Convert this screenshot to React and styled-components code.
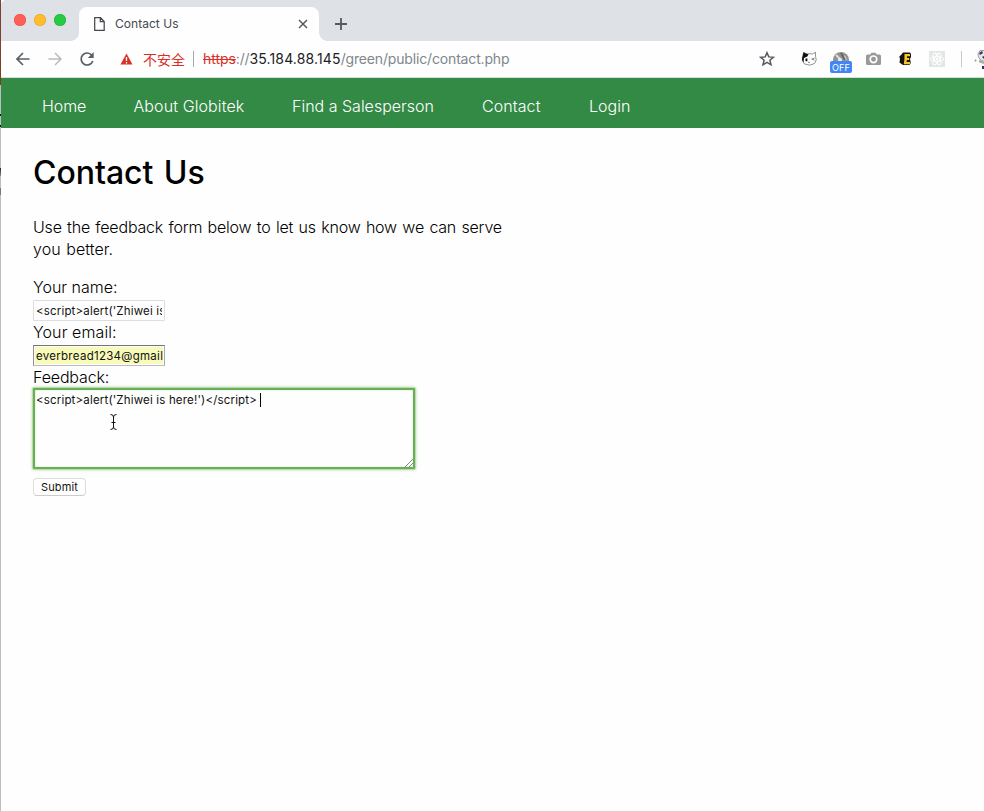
import React from 'react';
import styled, { createGlobalStyle } from 'styled-components';

const GlobalStyle = createGlobalStyle`
  *, *::before, *::after { box-sizing: border-box; }
  body { margin: 0; background: #fefefe; color: #000; overflow: hidden;
    font-family: Inter, "Liberation Sans", "Noto Sans CJK SC", sans-serif; }
`;
const Screen = styled.div`
  display: grid; grid-template-columns: 1px 983px; width: 984px; height: 811px; overflow: hidden;
`;
const DesktopEdge = styled.div`
  background:
    linear-gradient(#111, #111) 0 114px / 1px 2px no-repeat,
    linear-gradient(#111, #111) 0 125px / 1px 2px no-repeat,
    linear-gradient(#222, #888) 0 168px / 1px 8px no-repeat,
    linear-gradient(#777, #777) 0 188px / 1px 7px no-repeat,
    linear-gradient(#7a4335 0 60px, #803b17 60px 85px, #bebebe 85px);
`;
const Window = styled.div`min-width: 0;`;
const TabStrip = styled.div`
  display: flex; align-items: flex-end; height: 41px; padding-left: 12px;
  background: #dee1e6; border-top-left-radius: 5px;
`;
const Lights = styled.div`display: flex; gap: 8px; width: 66px; height: 26px;`;
const Light = styled.i`
  width: 12px; height: 12px; border-radius: 50%; background: ${p => p.$color};
  box-shadow: inset 0 0 0 .5px ${p => p.$rim};
`;
const LightsPad = styled.div`align-self: flex-start; padding: 14.4px 0 0 1px;`;
const Tab = styled.div`
  position: relative; display: flex; align-items: center; width: 240px; height: 34px;
  margin-left: -1px; padding: 0 11px 0 15px; background: #fefefe; border-radius: 8px 8px 0 0;
  &::before, &::after { content: ''; position: absolute; bottom: 0; width: 8px; height: 8px; }
  &::before { left: -8px; background: radial-gradient(circle at 0 0, transparent 7.5px, #fefefe 8px); }
  &::after { right: -8px; background: radial-gradient(circle at 100% 0, transparent 7.5px, #fefefe 8px); }
`;
const TabTitle = styled.span`
  margin-left: 10px; flex: 1; font-size: 12px; line-height: 16px; letter-spacing: .03px; color: #45494d;
`;
const NewTab = styled.div`height: 34px; display: flex; align-items: center; margin-left: 15px;`;
const Toolbar = styled.div`
  display: flex; align-items: center; height: 37px; background: #fefefe; border-bottom: 1px solid #dadcdc;
`;
const NavIcons = styled.div`display: flex; gap: 16px; margin-left: 14px;`;
const Address = styled.div`display: flex; align-items: center; margin-left: 25px; width: 639px; height: 36px;`;
const Insecure = styled.span`
  margin-left: 10px; width: 50px; white-space: nowrap; color: #d93025;
  font: 14px/20px "Noto Sans CJK SC", sans-serif;
`;
const Divider = styled.i`width: 1px; height: 16px; background: ${p => p.$color};`;
const Url = styled.span`
  margin-left: 9px; font-size: 14px; line-height: 20px; letter-spacing: -.16px; color: #80868b; white-space: nowrap;
`;
const Scheme = styled.span`color: #d93025; text-decoration: line-through; letter-spacing: -.05px;`;
const Host = styled.span`color: #202124; letter-spacing: 0.14px;`;
const Extensions = styled.div`display: flex; align-items: center; height: 36px; margin-left: 18px;`;
const ExtensionSlot = styled.div`
  position: relative; width: ${p => p.$width || 32}px; height: 24px; display: flex; align-items: center; justify-content: center; flex: none;
`;
const Badge = styled.b`
  position: absolute; left: 5px; top: 14px; width: 22px; height: 12px; border-radius: 2px;
  background: #4285f4; color: #fff; font-size: 9px; line-height: 13px; font-weight: 400; text-align: center; letter-spacing: .1px;
`;
const SiteNav = styled.nav`
  display: flex; gap: 48px; height: 50px; padding: 16px 0 0 41px; background: #338a45; color: #fff;
`;
const NavItem = styled.a`
  width: ${p => p.$width}px; white-space: nowrap; font-size: 16px; line-height: 24px; font-weight: 350;
  letter-spacing: ${p => p.$tracking || 0}px;
`;
const Content = styled.main`padding: 24px 32px;`;
const Heading = styled.h1`
  margin: 0; height: 40px; font-size: 32px; line-height: 41px; font-weight: 500; letter-spacing: -.05px; word-spacing: 2px; white-space: nowrap;
`;
const Intro = styled.p`
  margin: 24px 0 16px; font-size: 16px; line-height: 22px; font-weight: 350; letter-spacing: -.2px; word-spacing: 1.1px; white-space: nowrap;
`;
const IntroEnd = styled.span`letter-spacing: .05px;`;
const Form = styled.form`display: flex; flex-direction: column; align-items: flex-start;`;
const Label = styled.label`font-size: 16px; line-height: 22px; height: 22px; font-weight: 350; letter-spacing: ${p => p.$tracking || 0}px;`;
const Field = styled.div`
  width: 132px; height: 21px; margin: 2px 0 0; padding: 2px; overflow: hidden; border: 1px solid #ddd; border-radius: 1px;
  font-size: 11.5px; line-height: 15px; white-space: nowrap; color: #111;
  ${p => p.$filled && 'border-color: #737378 #aaa #bbb #8f8f94; border-radius: 0; padding: 1px;'}
`;
const FieldText = styled.div`
  overflow: hidden; padding-left: ${p => (p.$filled ? 1 : 0)}px; height: ${p => (p.$filled ? 17 : 15)}px;
  line-height: ${p => (p.$filled ? 18 : 16)}px; background: ${p => (p.$filled ? '#f7fab8' : 'transparent')};
  letter-spacing: ${p => p.$tracking}px;
`;
const Feedback = styled.div`
  position: relative; width: 382px; height: 81px; margin: 0; padding: 2px 0 0 1px;
  border: 2px solid #6bad58; border-radius: 1px; box-shadow: 0 0 0 1px #b9dcae, 0 0 3px 1px #b9dcae, inset 0 0 2px #b9dfad;
  font-size: 11.5px; line-height: 16px; letter-spacing: .17px; color: #111; display: flex; align-items: flex-start;
`;
const Caret = styled.i`width: 1px; height: 14px; margin: 1px 0 0 3px; background: #000;`;
const Grip = styled.svg`position: absolute; right: 0; bottom: 0;`;
const Pointer = styled.svg`position: absolute; left: 75px; top: 24px;`;
const Submit = styled.button`
  width: 53px; height: 18px; margin-top: 9px; padding: 0; border: 1px solid #ddd; border-bottom-color: #ccc; border-radius: 4px; background: #fff;
  color: #111; font: 11px/15px Inter, sans-serif; letter-spacing: .15px;
`;

const BackIcon = () => <svg width="16" height="16" fill="none" stroke="#5a5f64" strokeWidth="1.7"><path d="M14.5 8H2.3M8 2 2 8l6 6" /></svg>;
const ForwardIcon = () => <svg width="16" height="16" fill="none" stroke="#b9bbbd" strokeWidth="1.5"><path d="M1.5 8h12.2M8 2l6 6-6 6" /></svg>;
const ReloadIcon = () => <svg width="16" height="16"><path d="M12.8 4.2A6 6 0 1 0 13.8 10" fill="none" stroke="#5a5f64" strokeWidth="1.7" /><path d="M14.7 1v6H8.8z" fill="#5a5f64" /></svg>;

const CatIcon = () => (
  <svg width="16" height="16" viewBox="0 0 16 16">
    <path d="M2.5 1.5 6 3q3-.6 5.5 0L14.5 1.2v4Q16.5 9 13.5 12.5q-4.5 3-10 .5Q0 9.5 1.8 5z" fill="#fff" stroke="#777" strokeWidth=".8" />
    <path d="M2.5 1.2 6 3l1.5.2L6.3 5.5 3 7 2.5 11.5Q0 8.5 1.8 5zM4.5 7.5h1.9v2.7H4.5z" fill="#111" />
    <path d="m13.5 7-2.8 1.1 2.8.9M7 11q1 1.3 2 0" fill="none" stroke="#777" strokeWidth=".9" />
  </svg>
);
const GaugeIcon = () => (
  <svg width="16" height="16" viewBox="0 0 16 16">
    <path d="M0 9A8 8 0 0 1 16 9v4H0z" fill="#929292" />
    <path d="m3 4 4 4M13 9l-2-4" stroke="#ddd" strokeWidth="2" /><path d="m8 2 4 7" stroke="#666" strokeWidth="2" />
    <circle cx="7" cy="9" r="2" fill="#eee" />
  </svg>
);
const CameraIcon = () => (
  <svg width="15" height="14" viewBox="0 0 15 14">
    <path d="M1.5 2.5h2.7L5.5.8h4l1.3 1.7h2.7Q15 2.5 15 4v7.5q0 1.5-1.5 1.5h-12Q0 13 0 11.5V4q0-1.5 1.5-1.5" fill="#999" />
    <circle cx="7.5" cy="7.3" r="3.3" fill="none" stroke="#fff" strokeWidth="1.7" />
  </svg>
);
const BrandIcon = () => (
  <svg width="13" height="14" viewBox="0 0 13 14">
    <path d="M4 .5h7l1 1.5v3l-1 2 .8 4-1.3 2H4L2.5 12 .5 10.5 1 7 .3 4.5 2 3z" fill="#16130d" />
    <path d="M5.5 2H11v2.3H8V6h2.2v2H7.7v1.9H11v2.3H4.8l.6-4.8z" fill="#f6c62d" />
  </svg>
);
const AtomIcon = () => (
  <svg width="16" height="16" viewBox="0 0 16 16">
    <path fill="#e4e5e5" d="M0 0h16v16H0z" />
    <g fill="none" stroke="#fff" strokeWidth="1"><ellipse cx="8" cy="8" rx="6.5" ry="2.6" /><ellipse cx="8" cy="8" rx="6.5" ry="2.6" transform="rotate(60 8 8)" /><ellipse cx="8" cy="8" rx="6.5" ry="2.6" transform="rotate(120 8 8)" /></g>
    <circle cx="8" cy="8" r="1.4" fill="#fff" />
  </svg>
);
const AvatarIcon = () => (
  <svg width="14" height="22" viewBox="0 0 14 22">
    <path d="M8 6 10 2.5h5v11l-4.5-1.5-2-3z" fill="#e4e8e2" stroke="#839087" strokeWidth=".8" />
    <path d="m9 5 3-2 1 2-3 2zM12 9l2-1v3zM12 18h2v3h-2z" fill="#4a2867" /><circle cx="5.5" cy="12.5" r="1" fill="#8a9b8c" />
    <path d="m9 13 5 2" stroke="#9cac9d" strokeWidth="2" />
  </svg>
);

export default function App() {
  return (
    <>
      <GlobalStyle />
      <Screen>
        <DesktopEdge />
        <Window>
          <TabStrip>
            <LightsPad><Lights>
              <Light $color="#ff5f57" $rim="#e9483f" /><Light $color="#febc2e" $rim="#e2a127" /><Light $color="#28ca41" $rim="#1daf32" />
            </Lights></LightsPad>
            <Tab>
              <svg width="11" height="14" fill="none" stroke="#45494d" strokeWidth="1.25"><path d="M.7.7H6.5l3.7 3.8v8.8H.7zM6.3.7v4h4" /></svg>
              <TabTitle>Contact Us</TabTitle>
              <svg width="10" height="10" stroke="#55595e" strokeWidth="1.5"><path d="m1 1 8 8M9 1 1 9" /></svg>
            </Tab>
            <NewTab><svg width="14" height="14" stroke="#55595e" strokeWidth="1.8"><path d="M7 1v12M1 7h12" /></svg></NewTab>
          </TabStrip>
          <Toolbar>
            <NavIcons><BackIcon /><ForwardIcon /><ReloadIcon /></NavIcons>
            <Address>
              <svg width="13" height="12"><path d="M6.5.5 12.5 11.5H.5z" fill="#d93025" /><path d="M6.5 4v4M6.5 9v1.4" stroke="#fff" strokeWidth="1.3" /></svg>
              <Insecure>不安全</Insecure>
              <Divider $color="#a6a9ac" />
              <Url><Scheme>https</Scheme>://<Host>35.184.88.145</Host>/green/public/contact.php</Url>
            </Address>
            <svg width="16" height="16" fill="none" stroke="#55595e" strokeWidth="1.5"><path d="m8 1.7 1.8 4.2 4.6.4-3.5 3 1.1 4.5L8 11.4l-4 2.4 1.1-4.5-3.5-3 4.6-.4z" /></svg>
            <Extensions>
              <ExtensionSlot><CatIcon /></ExtensionSlot>
              <ExtensionSlot><GaugeIcon /><Badge>OFF</Badge></ExtensionSlot>
              <ExtensionSlot><CameraIcon /></ExtensionSlot>
              <ExtensionSlot><BrandIcon /></ExtensionSlot>
              <ExtensionSlot><AtomIcon /></ExtensionSlot>
              <ExtensionSlot $width={17}><Divider $color="#c7c9cb" /></ExtensionSlot>
              <AvatarIcon />
            </Extensions>
          </Toolbar>
          <SiteNav>
            <NavItem $width={43.5} $tracking={-0.1}>Home</NavItem>
            <NavItem $width={110.5} $tracking={0.1}>About Globitek</NavItem>
            <NavItem $width={142}>Find a Salesperson</NavItem>
            <NavItem $width={59} $tracking={0.08}>Contact</NavItem>
            <NavItem $width={42}>Login</NavItem>
          </SiteNav>
          <Content>
            <Heading>Contact Us</Heading>
            <Intro>Use the feedback form below to let us know how we can serve<br /><IntroEnd>you better.</IntroEnd></Intro>
            <Form>
              <Label>Your name:</Label>
              <Field><FieldText $tracking={.17}>{"<script>alert('Zhiwei is here!')</script>"}</FieldText></Field>
              <Label $tracking={0.1}>Your email:</Label>
              <Field $filled><FieldText $filled $tracking={.28}>everbread1234@gmail.com</FieldText></Field>
              <Label $tracking={-0.15}>Feedback:</Label>
              <Feedback>
                <span>{"<script>alert('Zhiwei is here!')</script>"}</span><Caret />
                <Grip width="9" height="9" stroke="#666" strokeWidth=".8"><path d="m1 9 8-8M5 9l4-4" /></Grip>
                <Pointer width="7" height="16" fill="none" stroke="#111" strokeWidth="1"><path d="M.5.5Q3.5.5 3.5 3v10Q3.5 15.5.5 15.5M6.5.5Q3.5.5 3.5 3M3.5 13q0 2.5 3 2.5M1.5 8.5h4" /></Pointer>
              </Feedback>
              <Submit type="button">Submit</Submit>
            </Form>
          </Content>
        </Window>
      </Screen>
    </>
  );
}
